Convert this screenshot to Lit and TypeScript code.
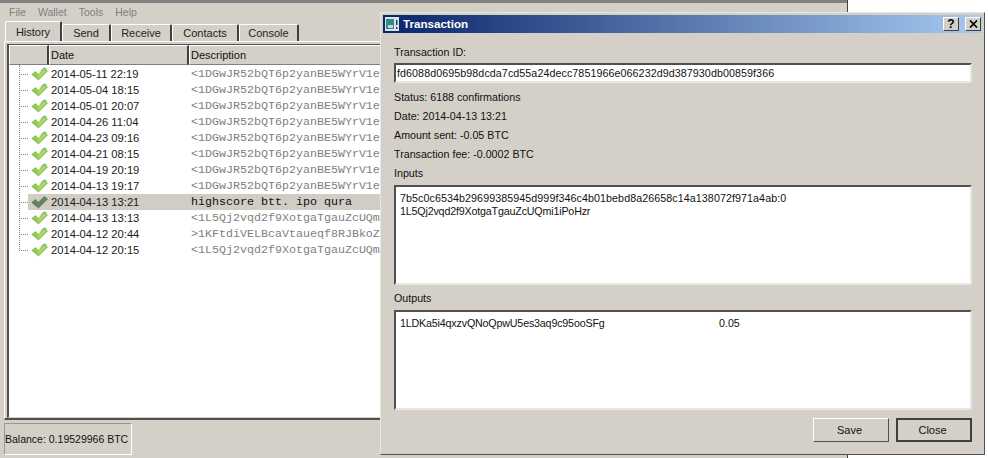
import { LitElement, html, css } from "lit";
import { customElement } from "lit/decorators.js";

const A = "<1DGwJR52bQT6p2yanBE5WYrV1e";
const B = "<1L5Qj2vqd2f9XotgaTgauZcUQmi1iPoHzr";
const rows = [
  ["2014-05-11 22:19", A], ["2014-05-04 18:15", A], ["2014-05-01 20:07", A], ["2014-04-26 11:04", A],
  ["2014-04-23 09:16", A], ["2014-04-21 08:15", A], ["2014-04-19 20:19", A], ["2014-04-13 19:17", A],
  ["2014-04-13 13:21", "highscore btt. ipo qura"], ["2014-04-13 13:13", B],
  ["2014-04-12 20:44", ">1KFtdiVELBcaVtaueqf8RJBkoZ"], ["2014-04-12 20:15", B],
];

@customElement("app-root")
export class AppRoot extends LitElement {
  static styles = css`
    :host { display: block; position: relative; width: 988px; height: 458px; overflow: hidden; background: #fff;
      font: 10.7px "Liberation Sans", Arial, sans-serif; color: #111; }
    .main { width: 847px; height: 458px; background: #d4d0c8; border-right: 1px solid #404040;
      display: flex; flex-direction: column; overflow: hidden; box-sizing: content-box; }
    .strip { height: 3px; flex: none; background: #808080; }
    .menu { height: 18px; flex: none; display: flex; align-items: center; color: #808080; padding-left: 9px; gap: 12px; font-size: 10.5px; }
    .tabs { height: 20px; flex: none; display: flex; align-items: flex-end; padding-left: 5px; }
    .tab { height: 17px; box-sizing: border-box; border: 1px solid #fff; border-right: 2px solid #404040; border-bottom: 0; border-radius: 2px 2px 0 0;
      display: flex; align-items: center; justify-content: center; font-size: 11px; color: #222; }
    .tab.on { height: 20px; background: #d4d0c8; }
    .panel { border-top: 1px solid #fff; border-left: 1px solid #fff; margin-left: 4px; padding: 2px 0 0 2px; height: 379px;
      flex: none; box-sizing: border-box; border-bottom: 2px solid #505050; }
    .table { height: 374px; background: #fff; border: 1px solid #505050; border-left: 2px solid #505050; border-bottom: 1px solid #d4d0c8; box-sizing: border-box; overflow: hidden; }
    .head { display: flex; height: 20px; background: #d4d0c8; }
    .hc { box-sizing: border-box; border-right: 2px solid #404040; border-left: 1px solid #fff; border-top: 1px solid #fff; border-bottom: 1px solid #808080; display: flex; align-items: center; padding-left: 1px; font-size: 11px; }
    .h0 { width: 40px; } .h1 { width: 140px; } .h2 { width: 640px; }
    .list { position: relative; padding-top: 1px; }
    .tree { position: absolute; left: 10px; top: 0; height: 186px; width: 1px; border-left: 1px dotted #808080; }
    .row { display: flex; height: 16px; align-items: center; }
    .twig { width: 9px; margin-left: 10px; border-top: 1px dotted #808080; flex: none; }
    .sel { flex: 1; display: flex; align-items: center; height: 16px; }
    .row.on .sel { background: #d0cdc5; }
    .row svg { flex: none; width: 17px; height: 16px; margin-left: 3px; display: block; }
    .date { width: 143px; padding-left: 3px; box-sizing: border-box; flex: none; font-size: 11.2px; color: #1a1a1a; }
    .desc { font: 11.67px "Liberation Mono", monospace; color: #808080; white-space: pre; }
    .row.on .desc { color: #111; }
    .status { flex: 1; display: flex; padding: 3px 0 0 4px; }
    .balance { width: 128px; box-sizing: border-box; height: 32px; border: 1px solid #fff; border-top-color: #9a9890; border-left-color: #9a9890; display: flex; align-items: center; font-size: 10.5px; white-space: nowrap; }
    .corner { position: absolute; left: 849px; top: -8px; font: 10px "Liberation Mono", monospace; color: #111; letter-spacing: 1.5px; white-space: nowrap; }
    .dlg { position: absolute; left: 380px; top: 12px; width: 605px; height: 443px; box-sizing: border-box; background: #d4d0c8;
      border: 1px solid #e8e6e0; border-right-color: #505050; border-bottom-color: #505050; padding: 2px; display: flex; flex-direction: column; }
    .title { height: 18px; flex: none; box-sizing: border-box; display: flex; align-items: center; background: linear-gradient(90deg, #0a246a, #a6caf0); padding: 0 1px 0 2px; color: #fff; font-weight: bold; font-size: 11.6px; gap: 4px; }
    .title .ico { width: 14px; height: 14px; flex: none; display: block; }
    .ttext { padding-bottom: 2px; }
    .spacer { flex: 1; }
    .wb { width: 16px; height: 14px; box-sizing: border-box; background: #d4d0c8; border: 1px solid; border-color: #fff #404040 #404040 #fff; color: #000; font: bold 12px "Liberation Sans", sans-serif; display: flex; align-items: center; justify-content: center; margin-left: 2px; }
    .wb svg { width: 9px; height: 8px; display: block; }
    .body { flex: 1; padding: 9px 10px 12px 11px; display: flex; flex-direction: column; }
    .lab { height: 19px; display: flex; align-items: center; flex: none; white-space: nowrap; }
    .field { box-sizing: border-box; background: #fff; border: 2px solid; border-color: #505050 #e8e6e0 #e8e6e0 #505050; flex: none; }
    .id { height: 20px; margin: 2px 0 4px; line-height: 16px; padding-left: 1px; letter-spacing: .08px; }
    .box { height: 100px; padding: 5px 4px; line-height: 13px; margin-top: 3px; }
    .hash { letter-spacing: .08px; }
    .addr { letter-spacing: -.17px; }
    .outs { margin-top: 3px; }
    .out { display: flex; }
    .out .addr { width: 319px; flex: none; }
    .btns { display: flex; justify-content: flex-end; gap: 7px; margin-top: 8px; }
    .btn { width: 76px; height: 24px; box-sizing: border-box; border: 1px solid; border-color: #fff #505050 #505050 #fff; display: flex; align-items: center; justify-content: center; padding-right: 3px; font-size: 11px; background: #d4d0c8; }
    .btn.def { border: 2px solid #404040; }
  `;

  check() {
    return html`<svg viewBox="0 0 17 16">
      <path d="M.8 8.5 L4.5 5.5 L7.2 8.5 L13.5 2.5 L16.5 5 L7.5 14 Z" fill="#93cc4c" stroke="#7fa86a" stroke-width=".7"/>
      <path d="M7.2 8.8 L13.7 3.2 L15.6 5 L7.5 12.8 Z" fill="#a9dc5e"/>
      <path d="M9.5 5 L13.5 1.6 L16 3.6" fill="none" stroke="#8a9cac" stroke-width="1"/>
    </svg>`;
  }
  checkOn() {
    return html`<svg viewBox="0 0 17 16">
      <path d="M.8 8.5 L4.5 5.5 L7.2 8.5 L13.5 2.5 L16.5 5 L7.5 14 Z" fill="#64845c" stroke="#5c6e5e" stroke-width=".7"/>
    </svg>`;
  }

  render() {
    return html`
      <div class="main">
        <div class="strip"></div>
        <div class="menu"><span>File</span><span>Wallet</span><span>Tools</span><span>Help</span></div>
        <div class="tabs">
          <div class="tab on" style="width:57px">History</div>
          <div class="tab" style="width:49px">Send</div>
          <div class="tab" style="width:61px">Receive</div>
          <div class="tab" style="width:67px">Contacts</div>
          <div class="tab" style="width:60px">Console</div>
        </div>
        <div class="panel">
          <div class="table">
            <div class="head">
              <div class="hc h0"></div><div class="hc h1">Date</div><div class="hc h2">Description</div>
            </div>
            <div class="list">
              <div class="tree"></div>
              ${rows.map((r, i) => html`
                <div class="row ${i === 8 ? "on" : ""}">
                  <div class="twig"></div>
                  <div class="sel">
                    ${i === 8 ? this.checkOn() : this.check()}
                    <div class="date">${r[0]}</div>
                    <div class="desc">${r[1]}</div>
                  </div>
                </div>`)}
            </div>
          </div>
        </div>
        <div class="status"><div class="balance">Balance: 0.19529966 BTC</div></div>
      </div>
      <div class="corner">PERFORMANCE THE</div>
      <div class="dlg">
        <div class="title">
          <svg class="ico" viewBox="0 0 14 14">
            <rect width="14" height="14" fill="#dfe4e4"/>
            <rect x="1" y="2" width="8" height="10" fill="#2f8a8a"/>
            <rect x="3" y="8" width="5" height="3" fill="#c8d8d0"/>
            <rect x="11" y="3" width="1.5" height="5" fill="#1d3a6a"/>
            <rect x="11" y="10" width="1.5" height="2" fill="#1d3a6a"/>
          </svg>
          <span class="ttext">Transaction</span>
          <span class="spacer"></span>
          <span class="wb">?</span>
          <span class="wb"><svg viewBox="0 0 9 8"><path d="M1 .5 L8 7.5 M8 .5 L1 7.5" stroke="#000" stroke-width="1.7" fill="none"/></svg></span>
        </div>
        <div class="body">
          <div class="lab">Transaction ID:</div>
          <div class="field id">fd6088d0695b98dcda7cd55a24decc7851966e066232d9d387930db00859f366</div>
          <div class="lab">Status: 6188 confirmations</div>
          <div class="lab">Date: 2014-04-13 13:21</div>
          <div class="lab">Amount sent: -0.05 BTC</div>
          <div class="lab">Transaction fee: -0.0002 BTC</div>
          <div class="lab">Inputs</div>
          <div class="field box"><div class="hash">7b5c0c6534b29699385945d999f346c4b01bebd8a26658c14a138072f971a4ab:0</div><div class="addr">1L5Qj2vqd2f9XotgaTgauZcUQmi1iPoHzr</div></div>
          <div class="lab outs">Outputs</div>
          <div class="field box"><div class="out"><span class="addr">1LDKa5i4qxzvQNoQpwU5es3aq9c95ooSFg</span><span>0.05</span></div></div>
          <div class="btns"><div class="btn">Save</div><div class="btn def">Close</div></div>
        </div>
      </div>
    `;
  }
}
